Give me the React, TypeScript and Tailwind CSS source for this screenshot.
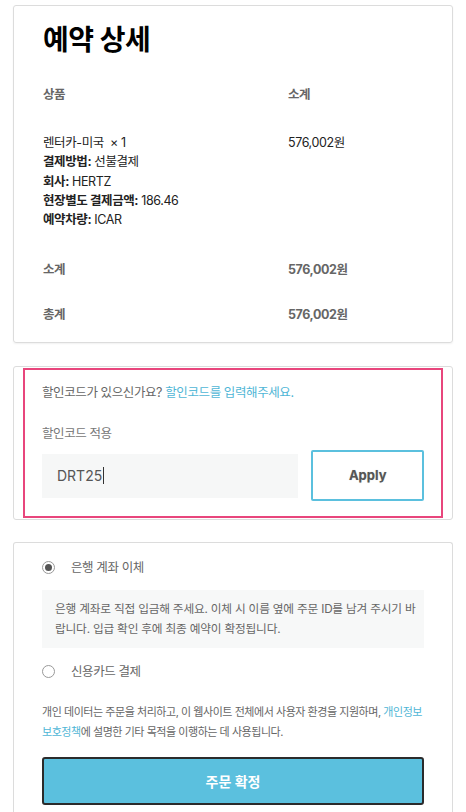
import React from 'react';

const font = { fontFamily: '"Inter", "Noto Sans CJK KR", sans-serif' };

const App = () => {
  return (
    <div className="min-h-screen bg-white px-[13px] pt-[5px] text-[12.5px] leading-[19px] tracking-[-0.4px] text-[#333]" style={font}>
      <section className="rounded-[3px] border border-[#dcdcdc] px-[29px] pt-[16px] pb-[18px] shadow-[0_1px_2px_rgba(0,0,0,0.06)]">
        <h1 className="text-[28px] font-bold leading-[36px] tracking-[-0.5px] text-black">예약 상세</h1>

        <div className="mt-[27px] grid grid-cols-[245px_1fr] font-semibold text-[#666]">
          <div>상품</div>
          <div>소계</div>
        </div>

        <div className="mt-[29px] grid grid-cols-[245px_1fr] leading-[19.3px] text-[#222]">
          <div>
            <div>렌터카-미국&nbsp; × 1</div>
            <div><span className="font-bold">결제방법:</span> 선불결제</div>
            <div><span className="font-bold">회사:</span> HERTZ</div>
            <div><span className="font-bold">현장별도 결제금액:</span> 186.46</div>
            <div><span className="font-bold">예약차량:</span> ICAR</div>
          </div>
          <div>576,002원</div>
        </div>

        <div className="mt-[31px] grid grid-cols-[245px_1fr] font-bold text-[#666]">
          <div>소계</div>
          <div>576,002원</div>
        </div>
        <div className="mt-[26px] grid grid-cols-[245px_1fr] font-bold text-[#666]">
          <div>총계</div>
          <div>576,002원</div>
        </div>
      </section>

      <section className="mt-[23px] rounded-[3px] border border-[#dcdcdc] px-[9px] py-px">
        <div className="border-2 border-[#e8467c] px-[17px] pt-[13px] pb-[15px]">
          <p className="text-[#666]">
            할인코드가 있으신가요? <span className="text-[#4fb6d6]">할인코드를 입력해주세요.</span>
          </p>
          <p className="mt-[22px] text-[#777]">할인코드 적용</p>
          <div className="mt-[7px] flex items-center gap-[13px]">
            <div className="flex h-[44px] w-[257px] items-center bg-[#f6f7f7] px-[15px] text-[14px] tracking-normal text-[#555]">
              DRT25<span className="ml-px inline-block h-[17px] w-px bg-[#333]" />
            </div>
            <button className="h-[51px] w-[113px] rounded-[2px] border-2 border-[#5bc0de] bg-white text-[13px] font-bold tracking-normal text-[#555] [text-shadow:0_0_1px_rgba(0,0,0,0.25)]">
              Apply
            </button>
          </div>
        </div>
      </section>

      <section className="mt-[22px] rounded-t-[3px] border border-b-0 border-[#dcdcdc] px-[28px] pt-[15px] pb-[8px]">
        <label className="flex items-center gap-[16px] text-[#666]">
          <span className="flex h-[13px] w-[13px] items-center justify-center rounded-full border border-[#999]">
            <span className="h-[7px] w-[7px] rounded-full bg-[#555]" />
          </span>
          은행 계좌 이체
        </label>
        <div className="mt-[13px] bg-[#f7f8f8] py-[9px] pr-px pl-[13px] text-[11.7px] leading-[20px] tracking-[-0.2px] text-[#666]">
          은행 계좌로 직접 입금해 주세요. 이체 시 이름 옆에 주문 ID를 남겨 주시기 바랍니다. 입급 확인 후에 최종 예약이 확정됩니다.
        </div>
        <label className="mt-[14px] flex items-center gap-[16px] text-[#666]">
          <span className="h-[13px] w-[13px] rounded-full border border-[#999]" />
          신용카드 결제
        </label>
        <p className="mt-[22px] text-[11px] leading-[19.5px] tracking-[-0.45px] text-[#666]">
          개인 데이터는 주문을 처리하고, 이 웹사이트 전체에서 사용자 환경을 지원하며, <span className="text-[#4fb6d6]">개인정보 보호정책</span>에 설명한 기타 목적을 이행하는 데 사용됩니다.
        </p>
        <button className="mt-[15px] h-[48px] w-full rounded-[3px] border-2 border-[#2b2b2b] bg-[#5bc0de] text-[14px] font-bold tracking-normal text-white">
          주문 확정
        </button>
      </section>
    </div>
  );
};

export default App;
